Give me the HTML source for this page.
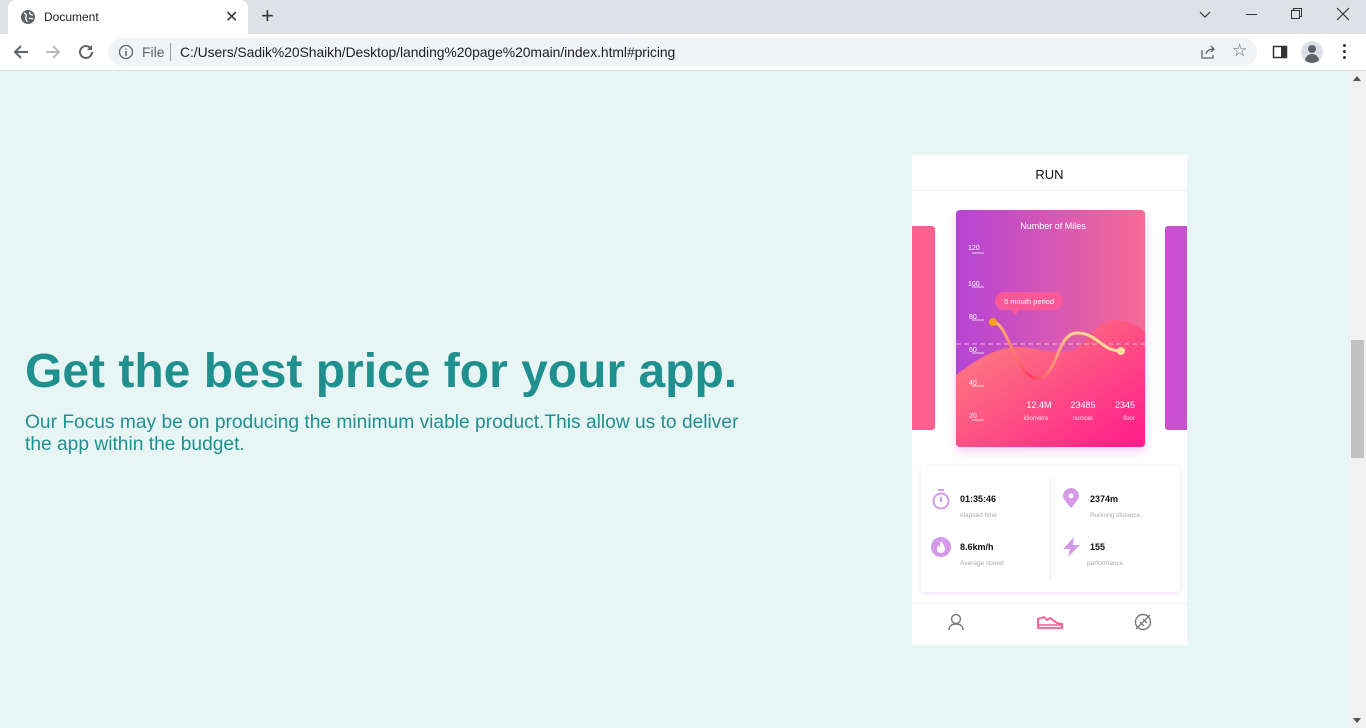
<!DOCTYPE html>
<html><head><meta charset="utf-8"><style>
*{margin:0;padding:0;box-sizing:border-box}
body{width:1366px;height:728px;overflow:hidden;background:#e8f5f5;font-family:"Liberation Sans",sans-serif;position:relative}
.abs{position:absolute}
</style></head><body>
<!-- chrome -->
<div class="abs" style="left:0;top:0;width:1366px;height:34px;background:#dee1e6"></div>
<div class="abs" style="left:8px;top:0;width:240px;height:34px;background:#fff;border-radius:8px 8px 0 0"></div>
<svg class="abs" style="left:20px;top:9px" width="16" height="16" viewBox="0 0 16 16"><circle cx="8" cy="8" r="7" fill="#5f6368"/><path d="M4 4c2 1 3 2 2 4s1 3 1 5M10 3c-1 2 1 3 3 3M9 9c1 1 3 0 4 1" stroke="#fff" stroke-width="1.3" fill="none"/></svg>
<div class="abs" style="left:44px;top:10px;font-size:12px;color:#202124">Document</div>
<div class="abs" style="left:225px;top:7px;font-size:16px;color:#333">✕</div>
<div class="abs" style="left:261px;top:3px;font-size:22px;color:#333">+</div>
<svg class="abs" style="left:1198px;top:8px" width="14" height="14"><path d="M2 4l5 5 5-5" stroke="#333" fill="none" stroke-width="1.2"/></svg>
<div class="abs" style="left:1246px;top:14px;width:11px;height:1px;background:#333"></div>
<svg class="abs" style="left:1290px;top:7px" width="14" height="14"><rect x="1.5" y="3.5" width="8" height="8" fill="none" stroke="#333"/><path d="M3.5 3.5V1.5h8v8h-2" fill="none" stroke="#333"/></svg>
<svg class="abs" style="left:1336px;top:7px" width="14" height="14"><path d="M1 1l12 12M13 1L1 13" stroke="#333" stroke-width="1.2"/></svg>
<div class="abs" style="left:0;top:34px;width:1366px;height:37px;background:#fff;border-bottom:1px solid #dadce0"></div>
<svg class="abs" style="left:12px;top:43px" width="18" height="18"><path d="M16 9H3M9 3L3 9l6 6" stroke="#5f6368" stroke-width="2" fill="none"/></svg>
<svg class="abs" style="left:44px;top:43px" width="18" height="18"><path d="M2 9h13M9 3l6 6-6 6" stroke="#bbb" stroke-width="2" fill="none"/></svg>
<svg class="abs" style="left:77px;top:43px" width="18" height="18"><path d="M15 9a6 6 0 1 1-2-4.5" stroke="#5f6368" stroke-width="2" fill="none"/><path d="M15 2v5h-5z" fill="#5f6368"/></svg>
<div class="abs" style="left:108px;top:38px;width:1149px;height:28px;background:#f1f3f4;border-radius:14px"></div>
<svg class="abs" style="left:118px;top:44px" width="16" height="16"><circle cx="8" cy="8" r="6.5" stroke="#5f6368" stroke-width="1.3" fill="none"/><path d="M8 7v5M8 4.5v1.3" stroke="#5f6368" stroke-width="1.5"/></svg>
<div class="abs" style="left:142px;top:44px;font-size:14px;color:#5f6368">File</div>
<div class="abs" style="left:170px;top:43px;width:1px;height:18px;background:#999"></div>
<div class="abs" style="left:180px;top:44px;font-size:13.9px;letter-spacing:-0.05px;color:#202124">C:/Users/Sadik%20Shaikh/Desktop/landing%20page%20main/index.html#pricing</div>
<svg class="abs" style="left:1200px;top:44px" width="16" height="16"><path d="M2 6v8h11v-3M6 10c1-4 4-5 8-5M11 2l3 3-3 3" stroke="#5f6368" stroke-width="1.3" fill="none"/></svg>
<div class="abs" style="left:1232px;top:41px;font-size:17px;color:#5f6368">☆</div>
<svg class="abs" style="left:1272px;top:44px" width="16" height="16"><rect x="1.5" y="2.5" width="13" height="11" fill="none" stroke="#333" stroke-width="1.5"/><rect x="9" y="2.5" width="5" height="11" fill="#333"/></svg>
<div class="abs" style="left:1301px;top:41px;width:22px;height:22px;border-radius:50%;background:#dde0e6;overflow:hidden"><div class="abs" style="left:7px;top:4px;width:8px;height:8px;border-radius:50%;background:#5f6368"></div><div class="abs" style="left:4px;top:13px;width:14px;height:9px;border-radius:7px 7px 0 0;background:#5f6368"></div></div>
<div class="abs" style="left:1343px;top:44px;width:4px;line-height:5px;font-size:0"><div style="width:3px;height:3px;border-radius:50%;background:#333;margin-bottom:3px"></div><div style="width:3px;height:3px;border-radius:50%;background:#333;margin-bottom:3px"></div><div style="width:3px;height:3px;border-radius:50%;background:#333"></div></div>
<!-- scrollbar -->
<div class="abs" style="left:1349px;top:71px;width:17px;height:657px;background:#f1f1f1"></div>
<div class="abs" style="left:1351px;top:340px;width:13px;height:118px;background:#c1c1c1"></div>
<div class="abs" style="left:1353px;top:76px;width:0;height:0;border-left:4px solid transparent;border-right:4px solid transparent;border-bottom:5px solid #505050"></div>
<div class="abs" style="left:1353px;top:718px;width:0;height:0;border-left:4px solid transparent;border-right:4px solid transparent;border-top:5px solid #505050"></div>
<!-- text -->
<div class="abs" style="left:25px;top:344px;font-size:48px;font-weight:bold;color:#20908f;white-space:nowrap">Get the best price for your app.</div>
<div class="abs" style="left:25px;top:412px;width:740px;font-size:19.2px;line-height:22px;color:#20908f">Our Focus may be on producing the minimum viable product.This allow us to deliver the app within the budget.</div>
<!-- phone -->
<div class="abs" style="left:912px;top:155px;width:275px;height:490px;background:#fff;overflow:hidden">
 <div class="abs" style="left:0;top:0;width:275px;height:36px;border-bottom:1px solid #eee;text-align:center;line-height:40px;font-size:13px;color:#111">RUN</div>
 <div class="abs" style="left:0;top:71px;width:23px;height:204px;background:#ff5f8e;border-radius:0 3px 3px 0"></div>
 <div class="abs" style="left:253px;top:71px;width:23px;height:204px;background:#c950cf;border-radius:3px 0 0 3px"></div>
 <div class="abs" style="left:44px;top:55px;width:189px;height:237px;border-radius:4px;overflow:hidden;background:linear-gradient(90deg,#b444d4,#f76a96);box-shadow:0 4px 10px rgba(220,100,220,.3)">
  <svg class="abs" style="left:0;top:0" width="189" height="237">
   <defs><linearGradient id="g" x1="0" y1="0" x2="1" y2="1"><stop offset="0" stop-color="#fb8b7e"/><stop offset="1" stop-color="#ff1a8a"/></linearGradient>
   <linearGradient id="l" x1="0" x2="1"><stop offset="0" stop-color="#ffc77a"/><stop offset=".3" stop-color="#ff3860"/><stop offset=".6" stop-color="#ffd28a"/><stop offset="1" stop-color="#ffe0a0"/></linearGradient></defs>
   <path d="M0 165C20 150 40 137 62 137S110 150 125 135S145 110 159 110S180 115 189 122V237H0z" fill="url(#g)"/>
   <path d="M0 134H189" stroke="#f5b0d8" stroke-dasharray="5 3" stroke-width="1"/>
   <path d="M37 112C52 112 60 168 81 168S100 123 121 123S145 141 165 141" stroke="url(#l)" stroke-width="3" fill="none"/>
   <circle cx="37" cy="112" r="4" fill="#f6a416"/><circle cx="165" cy="141" r="4" fill="#ffe0a0"/>
   <rect x="39" y="82" width="68" height="18" rx="9" fill="#f95898"/><path d="M55 100l4 6 4-6z" fill="#f95898"/>
   <text x="73" y="94" font-size="7.5" fill="#fff" text-anchor="middle" font-family="Liberation Sans">5 mouth period</text>
   <text x="97" y="19" font-size="9" fill="#fff" text-anchor="middle" font-family="Liberation Sans">Number of Miles</text>
   <g font-size="7" fill="#fff" font-family="Liberation Sans"><text x="12" y="40">120</text><text x="12" y="76">100</text><text x="13" y="109">80</text><text x="13" y="142">60</text><text x="13" y="175">40</text><text x="13" y="208">20</text></g>
   <g stroke="#fff" stroke-width=".8"><path d="M16 43h12M16 77h12M16 110h12M16 143h12M16 176h12M16 210h12"/></g>
   <g font-size="9" fill="#fff" font-family="Liberation Sans" text-anchor="middle"><text x="83" y="198">12.4M</text><text x="127" y="198">23485</text><text x="169" y="198">2345</text></g>
   <g font-size="6" fill="#fde" font-family="Liberation Sans" text-anchor="middle"><text x="80" y="210">kilometre</text><text x="127" y="210">number</text><text x="173" y="210">floor</text></g>
  </svg>
 </div>
 <div class="abs" style="left:9px;top:311px;width:259px;height:126px;border-radius:4px;box-shadow:0 1px 5px rgba(200,150,220,.3);background:#fff">
  <div class="abs" style="left:129px;top:11px;width:1px;height:104px;background:#eee"></div>
  <svg class="abs" style="left:10px;top:22px" width="20" height="22"><circle cx="10" cy="13" r="7.5" stroke="#d49ae8" stroke-width="2" fill="none"/><path d="M10 9v5M7 2h6" stroke="#d49ae8" stroke-width="2"/></svg>
  <svg class="abs" style="left:140px;top:22px" width="20" height="22"><path d="M10 20C4 13 2 10 2 8a8 8 0 0 1 16 0c0 2-2 5-8 12z" fill="#d49ae8"/><circle cx="10" cy="8" r="2.5" fill="#fff"/></svg>
  <svg class="abs" style="left:9px;top:70px" width="22" height="22"><circle cx="11" cy="11" r="10" fill="#d49ae8"/><path d="M11 5c2 3 4 5 4 8a4 4 0 0 1-8 0c0-2 1-3 2-4 0 2 1 2 1 2 0-2 0-4 1-6z" fill="#fff"/></svg>
  <svg class="abs" style="left:140px;top:70px" width="22" height="22"><path d="M13 1L2 13h7l-2 8 12-12h-7z" fill="#d49ae8"/></svg>
  <div class="abs" style="left:39px;top:28px;font-size:9px;font-weight:bold;color:#111">01:35:46</div>
  <div class="abs" style="left:39px;top:46px;font-size:6.5px;color:#aaa">elapsed time</div>
  <div class="abs" style="left:169px;top:28px;font-size:9px;font-weight:bold;color:#111">2374m</div>
  <div class="abs" style="left:169px;top:46px;font-size:6.5px;color:#aaa">Running distance</div>
  <div class="abs" style="left:39px;top:76px;font-size:9px;font-weight:bold;color:#111">8.6km/h</div>
  <div class="abs" style="left:39px;top:94px;font-size:6.5px;color:#aaa">Average speed</div>
  <div class="abs" style="left:169px;top:76px;font-size:9px;font-weight:bold;color:#111">155</div>
  <div class="abs" style="left:166px;top:94px;font-size:6.5px;color:#aaa">performance</div>
 </div>
 <div class="abs" style="left:0;top:448px;width:275px;height:1px;background:#eee"></div>
 <svg class="abs" style="left:36px;top:458px" width="16" height="18"><circle cx="8" cy="6" r="4.5" stroke="#777" stroke-width="1.4" fill="none"/><path d="M1 17c0-4 3-6 7-6s7 2 7 6" stroke="#777" stroke-width="1.4" fill="none"/></svg>
 <svg class="abs" style="left:124px;top:458px" width="28" height="18"><path d="M2 6l6-2 3 3 3-2 7 5 5 1v4H2z" stroke="#f55a90" stroke-width="1.8" fill="none"/><path d="M2 12h24" stroke="#f55a90" stroke-width="1.5"/></svg>
 <svg class="abs" style="left:222px;top:458px" width="18" height="18"><circle cx="9" cy="9" r="7.5" stroke="#777" stroke-width="1.4" fill="none"/><path d="M2 16L16 2M6 9l4 4M9 6l4 4" stroke="#777" stroke-width="1.3"/></svg>
</div>
</body></html>
